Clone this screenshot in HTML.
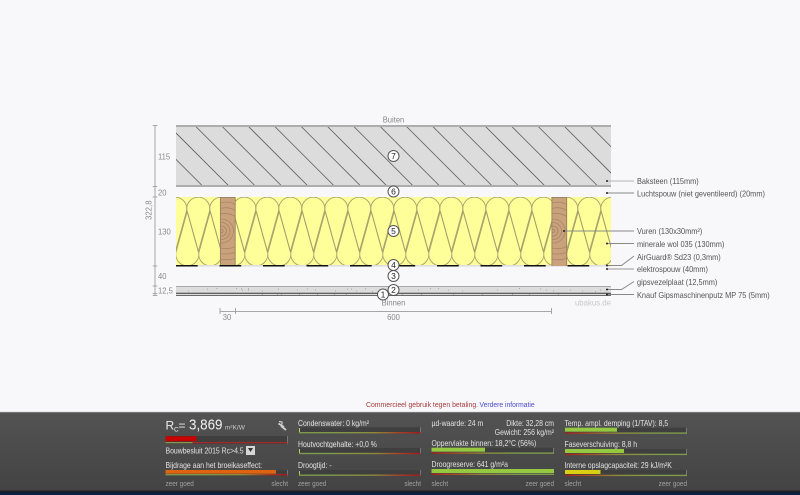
<!DOCTYPE html>
<html>
<head>
<meta charset="utf-8">
<style>
html,body{margin:0;padding:0;width:800px;height:495px;overflow:hidden;background:#f8f8fb}
svg{position:absolute;left:0;top:0;display:block;filter:blur(.3px)}
text{font-family:"Liberation Sans",sans-serif}
.d{font-size:8.5px;fill:#888}
.l{font-size:8.2px;fill:#555}
.f{font-size:8px;fill:#e2e2e2}
.s{font-size:7px;fill:#a2a2a2}
.n{font-size:7.5px}
</style>
</head>
<body>
<svg width="800" height="495" viewBox="0 0 800 495" xmlns="http://www.w3.org/2000/svg">
<defs>
<clipPath id="bc"><rect x="176" y="126" width="435" height="60"/></clipPath>
<clipPath id="wc"><rect x="220" y="197" width="15.5" height="69"/></clipPath>
<pattern id="wool" x="176" y="197" width="23" height="69" patternUnits="userSpaceOnUse">
<g fill="none" stroke="#a5a16c" stroke-width=".9">
<path d="M22.3 54.7L11.1 14.3A11.5 11.5 0 1 1 33.5 14.3L22.3 54.7"/>
<path d="M-.7 54.7L-11.9 14.3A11.5 11.5 0 1 1 10.5 14.3L-.7 54.7"/>
<path d="M11.3 14.3L.1 54.7A11.5 11.5 0 1 0 22.5 54.7L11.3 14.3"/>
</g>
</pattern>
<linearGradient id="gb" x1="0" x2="1" y1="0" y2="0">
<stop offset="0" stop-color="#7f9a4c"/><stop offset=".3" stop-color="#7f9a4c"/><stop offset=".62" stop-color="#8f8a3a"/><stop offset=".85" stop-color="#a83a26"/><stop offset="1" stop-color="#a81818"/>
</linearGradient>
<linearGradient id="gg" x1="0" x2="1" y1="0" y2="0">
<stop offset="0" stop-color="#a82020"/><stop offset=".18" stop-color="#a84a26"/><stop offset=".42" stop-color="#8f8a3a"/><stop offset=".7" stop-color="#7f9a4c"/><stop offset="1" stop-color="#7f9a4c"/>
</linearGradient>
<linearGradient id="foot" x1="0" x2="0" y1="0" y2="1">
<stop offset="0" stop-color="#535353"/><stop offset="1" stop-color="#434343"/>
</linearGradient>
<g id="wood">
<rect x="220" y="197" width="15.5" height="69" fill="#c9a27c"/>
<g clip-path="url(#wc)" fill="none" stroke="#a8866a" stroke-width=".8">
<circle cx="221.500" cy="231" r="1.600"/><circle cx="221.500" cy="231" r="5"/><circle cx="221.500" cy="231" r="8.500"/><circle cx="221.500" cy="231" r="12"/>
<path d="M220 214Q229 212 236 217M220 208.500Q229 206 236 211M220 203Q229 200.500 236 205"/>
<path d="M220 248Q229 250 236 246M220 253.500Q229 255 236 252M220 259Q229 261 236 258"/>
</g>
<path d="M220.400 197V266M235.200 197V266M220 197.400H235.500" fill="none" stroke="#98805f" stroke-width=".9"/>
</g>
</defs>

<rect width="800" height="495" fill="#f8f8fb"/>

<!-- brick -->
<rect x="176" y="125" width="435" height="62" fill="#dcdcdc"/>
<path clip-path="url(#bc)" d="M142.600 126l60 60M169 126l60 60M195.300 126l60 60M221.700 126l60 60M248 126l60 60M274.300 126l60 60M300.700 126l60 60M327 126l60 60M353.300 126l60 60M379.700 126l60 60M406 126l60 60M432.300 126l60 60M458.700 126l60 60M485 126l60 60M511.300 126l60 60M537.700 126l60 60M564 126l60 60M590.300 126l60 60" stroke="#5c5c5c" stroke-width=".8" fill="none"/>
<rect x="176" y="125" width="435" height="2" fill="#adadad"/>
<rect x="176" y="185" width="435" height="2" fill="#adadad"/>

<!-- insulation -->
<rect x="176" y="197" width="435" height="69" fill="#ffff99"/>
<rect x="176" y="197" width="435" height="69" fill="url(#wool)"/>
<rect x="176" y="265" width="435" height="1.600" fill="#dedede"/>
<use href="#wood"/>
<use href="#wood" transform="translate(331.500,0)"/>
<path d="M176 265.800h21.700M219.500 265.800h21.700M263 265.800h21.700M306.500 265.800h21.700M350 265.800h21.700M393.500 265.800h21.700M437 265.800h21.700M480.500 265.800h21.700M524 265.800h21.700M567.500 265.800h21.700" stroke="#111" stroke-width="1.500" fill="none"/>

<!-- gypsum -->
<rect x="176" y="286" width="435" height="10" fill="#dcdcdc"/>
<rect x="176" y="286" width="435" height="1" fill="#a8a8a8"/>
<rect x="176" y="292.700" width="435" height="1.200" fill="#555"/>
<rect x="176" y="295" width="435" height="1" fill="#6a6a6a"/>
<path d="M188 291.100h.8M207 289.100h.8M216.500 288.600h.8M236 288.600h.8M242 290.100h.8M241 288.800h.8M248 288.800h.8M248 290.100h.8M262 291.100h.8M277 294.400h.8M278 289.100h.8M297 290.100h.8M299 294.400h.8M317 294.400h.8M334 294.400h.8M347 289.100h.8M281 294.400h.8M262 294.400h.8M307 289h.8M315 290h.8M335 291h.8M346 294.400h.8M351 289h.8M356 291h.8M365 288.800h.8M372 291.500h.8M380 294.400h.8M402 294.400h.8M418 290h.8M421 294.400h.8M430 288.600h.8M438 288.600h.8M448 290.100h.8M453 294.400h.8M462 291h.8M482 294.400h.8M497 290h.8M512 294.400h.8M519 288.600h.8M529 294.400h.8M540 289h.8M546 290h.8M553 291h.8M558 294.400h.8M570 290h.8M582 291h.8M595 291.500h.8M600 290h.8M606 294.400h.8" stroke="#888" stroke-width=".8" fill="none"/>

<!-- dimensions -->
<path d="M155 125V296M152.700 125.500h4.600M152.700 186.500h4.600M152.700 197h4.600M152.700 266h4.600M152.700 286h4.600M152.700 293.500h4.600M152.700 295.500h4.600" stroke="#a6a6a6" stroke-width="1" fill="none"/>
<path d="M220 308v6M235.500 308v6M551.500 308v6M220 311.500h15.500M235.500 311.500h316" stroke="#a6a6a6" stroke-width="1" fill="none"/>
<text class="d" transform="translate(158,159.500) scale(.9,1)">115</text>
<text class="d" transform="translate(158,195.500) scale(.9,1)">20</text>
<text class="d" transform="translate(158,234.500) scale(.9,1)">130</text>
<text class="d" transform="translate(158,279) scale(.9,1)">40</text>
<text class="d" transform="translate(158,293.500) scale(.9,1)">12,5</text>
<text class="d" transform="translate(151.700,220) rotate(-90) scale(.92,1)">322,8</text>
<text class="d" transform="translate(227,320) scale(.9,1)" text-anchor="middle">30</text>
<text class="d" transform="translate(393.500,320) scale(.9,1)" text-anchor="middle">600</text>
<text class="d" transform="translate(393.500,122.500) scale(.95,1)" text-anchor="middle" style="font-size:8px">Buiten</text>
<text class="d" transform="translate(393.500,305.500) scale(.95,1)" text-anchor="middle" style="font-size:8px">Binnen</text>
<text transform="translate(611,305.500) scale(.92,1)" text-anchor="end" style="font-size:8.500px;fill:#c8c8c8">ubakus.de</text>

<!-- circles -->
<g fill="#fff" stroke="#555" stroke-width="1">
<circle cx="393.500" cy="156" r="5.500"/><circle cx="393.500" cy="191.500" r="5.500"/><circle cx="393.500" cy="231" r="5.500"/><circle cx="393.500" cy="265" r="5.500"/><circle cx="393.500" cy="276" r="5.500"/><circle cx="393.500" cy="290" r="5.500"/><circle cx="383" cy="294.500" r="5.500"/>
</g>
<g style="font-size:8.500px;fill:#222" text-anchor="middle">
<text x="393.500" y="159">7</text><text x="393.500" y="194.500">6</text><text x="393.500" y="234">5</text><text x="393.500" y="268">4</text><text x="393.500" y="279">3</text><text x="393.500" y="293">2</text><text x="383" y="297.500">1</text>
</g>

<!-- leaders -->
<g fill="none" stroke-width="1">
<path d="M607 181h27" stroke="#b5b5b5"/>
<path d="M607 193h27" stroke="#888"/>
<path d="M564 231h70" stroke="#888"/>
<path d="M607 243.500h27" stroke="#888"/>
<path d="M607 265.500h14.500L634 256" stroke="#888"/>
<path d="M607 269h27" stroke="#999"/>
<path d="M607 289.500h14.500L634 281.500" stroke="#888"/>
<path d="M607 294.500h27" stroke="#888"/>
</g>
<g fill="#222">
<circle cx="607" cy="181" r="1"/><circle cx="607" cy="193" r="1"/><circle cx="564" cy="231" r="1"/><circle cx="607" cy="243.500" r="1"/><circle cx="607" cy="265.500" r="1"/><circle cx="607" cy="269" r="1"/><circle cx="607" cy="289.500" r="1"/><circle cx="607" cy="294.500" r="1"/>
</g>
<text class="l" transform="translate(637,184) scale(.9,1)">Baksteen (115mm)</text>
<text class="l" transform="translate(637,196.500) scale(.9,1)">Luchtspouw (niet geventileerd) (20mm)</text>
<text class="l" transform="translate(637,234) scale(.9,1)">Vuren (130x30mm²)</text>
<text class="l" transform="translate(637,247) scale(.9,1)">minerale wol 035 (130mm)</text>
<text class="l" transform="translate(637,260) scale(.9,1)">AirGuard® Sd23 (0,3mm)</text>
<text class="l" transform="translate(637,272) scale(.9,1)">elektrospouw (40mm)</text>
<text class="l" transform="translate(637,285) scale(.9,1)">gipsvezelplaat (12,5mm)</text>
<text class="l" transform="translate(637,298) scale(.9,1)">Knauf Gipsmaschinenputz MP 75 (5mm)</text>

<!-- notice -->
<text class="n" transform="translate(366,407) scale(.92,1)" style="fill:#a83a3a">Commercieel gebruik tegen betaling.</text>
<text class="n" transform="translate(479.500,407) scale(.9,1)" style="fill:#4a4ad0">Verdere informatie</text>

<!-- footer -->
<rect x="0" y="412" width="800" height="79" fill="url(#foot)"/>
<rect x="0" y="411.500" width="800" height="1" fill="#c8c8c8" opacity=".6"/>
<rect x="0" y="490.500" width="800" height="1.500" fill="#222"/>
<rect x="0" y="492" width="800" height="3" fill="#0e2040"/>

<!-- col 1 -->
<text x="165.500" y="429.500" style="font-size:12px;fill:#eee">R</text>
<text x="174" y="431.500" style="font-size:6.500px;fill:#eee">C</text>
<text x="178.500" y="429.500" style="font-size:12px;fill:#eee">=</text>
<text transform="translate(189,429.500) scale(.93,1)" style="font-size:14.400px;fill:#f2f2f2">3,869</text>
<text x="225" y="429.500" style="font-size:6.500px;fill:#ccc">m²K/W</text>
<path d="M278.500 423.500l5.500 3.500M281 426l5 4" stroke="#cfcfcf" stroke-width="1.800" fill="none"/>
<path d="M279 421.500l3 .5 0 2.500" stroke="#cfcfcf" stroke-width="1.200" fill="none"/>
<rect x="165.500" y="436" width="122.500" height="8" fill="#3f3f3f"/>
<path d="M287.500 436v8" stroke="#777"/>
<rect x="165.500" y="436.300" width="31" height="5" fill="#c80000"/>
<rect x="165.500" y="442" width="122" height="1.300" fill="#a82828"/>
<rect x="165.500" y="442" width="27" height="1.300" fill="#7f9a4c"/>
<text class="f" transform="translate(165.500,453.500) scale(.86,1)">Bouwbesluit 2015 Rc&gt;4.5</text>
<rect x="246" y="446" width="9" height="9" fill="#d6d6d6"/>
<path d="M248 448h5l-2.500 4z" fill="#333"/>
<text class="f" transform="translate(165.500,468) scale(.86,1)">Bijdrage aan het broeikaseffect:</text>
<rect x="165.500" y="470" width="122.500" height="6" fill="#3f3f3f"/>
<path d="M287.500 470v6" stroke="#777"/>
<rect x="165.500" y="470" width="110.500" height="3.700" fill="#e0640f"/>
<rect x="165.500" y="474" width="122" height="1.400" fill="url(#gb)"/>
<text class="s" transform="translate(165.500,486) scale(.91,1)">zeer goed</text>
<text class="s" transform="translate(288,486) scale(.91,1)" text-anchor="end">slecht</text>

<!-- col 2 -->
<text class="f" transform="translate(298,426) scale(.86,1)">Condenswater: 0 kg/m²</text>
<rect x="299" y="427.300" width="121.500" height="6" fill="#3f3f3f"/>
<path d="M420.500 427.300v6" stroke="#777"/><path d="M299.500 428v4" stroke="#b5d060"/>
<rect x="299" y="432" width="121.500" height="1.400" fill="url(#gb)"/>
<text class="f" transform="translate(298,447) scale(.86,1)">Houtvochtgehalte: +0,0 %</text>
<rect x="299" y="448" width="121.500" height="6" fill="#3f3f3f"/>
<path d="M420.500 448v6" stroke="#777"/><path d="M299.500 449v4" stroke="#b5d060"/>
<rect x="299" y="452.800" width="121.500" height="1.400" fill="url(#gb)"/>
<text class="f" transform="translate(298,468) scale(.86,1)">Droogtijd: -</text>
<rect x="299" y="470" width="121.500" height="6" fill="#3f3f3f"/>
<path d="M420.500 470v6" stroke="#777"/><path d="M299.500 471v3.500" stroke="#b5d060"/>
<rect x="299" y="474.500" width="121.500" height="1.400" fill="url(#gb)"/>
<text class="s" transform="translate(298,486) scale(.91,1)">zeer goed</text>
<text class="s" transform="translate(421,486) scale(.91,1)" text-anchor="end">slecht</text>

<!-- col 3 -->
<text class="f" transform="translate(431.500,426) scale(.86,1)">µd-waarde: 24 m</text>
<text class="f" transform="translate(554,426) scale(.86,1)" text-anchor="end">Dikte: 32,28 cm</text>
<text class="f" transform="translate(554,435) scale(.86,1)" text-anchor="end">Gewicht: 256 kg/m²</text>
<text class="f" transform="translate(431.500,446) scale(.86,1)">Oppervlakte binnen: 18,2°C (56%)</text>
<rect x="431.500" y="447.700" width="122.500" height="6" fill="#3f3f3f"/>
<path d="M553.500 447.700v6" stroke="#777"/>
<rect x="431.500" y="447.700" width="53.500" height="4" fill="#94c840"/>
<rect x="431.500" y="452.400" width="122.500" height="1.400" fill="url(#gg)"/>
<text class="f" transform="translate(431.500,467) scale(.86,1)">Droogreserve: 641 g/m²a</text>
<rect x="431.500" y="469" width="122.500" height="4" fill="#94c840"/>
<rect x="431.500" y="473.600" width="122.500" height="1.400" fill="url(#gg)"/>
<text class="s" transform="translate(431.500,486) scale(.91,1)">slecht</text>
<text class="s" transform="translate(554,486) scale(.91,1)" text-anchor="end">zeer goed</text>

<!-- col 4 -->
<text class="f" transform="translate(564.500,426) scale(.86,1)">Temp. ampl. demping (1/TAV): 8,5</text>
<rect x="565" y="427.700" width="122" height="6" fill="#3f3f3f"/>
<path d="M686.500 427.700v6" stroke="#777"/>
<rect x="565" y="427.700" width="52" height="4" fill="#94c840"/>
<rect x="565" y="432.400" width="122" height="1.400" fill="url(#gg)"/>
<text class="f" transform="translate(564.500,447) scale(.86,1)">Faseverschuiving: 8,8 h</text>
<rect x="565" y="449" width="122" height="6" fill="#3f3f3f"/>
<path d="M686.500 449v6" stroke="#777"/>
<rect x="565" y="449" width="59" height="4" fill="#94c840"/>
<rect x="565" y="453.700" width="122" height="1.400" fill="url(#gg)"/>
<text class="f" transform="translate(564.500,468) scale(.86,1)">Interne opslagcapaciteit: 29 kJ/m²K</text>
<rect x="565" y="470" width="122" height="6" fill="#3f3f3f"/>
<path d="M686.500 470v6" stroke="#777"/>
<rect x="565" y="470" width="35.500" height="4" fill="#d8d010"/>
<rect x="565" y="474.700" width="122" height="1.400" fill="url(#gg)"/>
<text class="s" transform="translate(564.500,486) scale(.91,1)">slecht</text>
<text class="s" transform="translate(687,486) scale(.91,1)" text-anchor="end">zeer goed</text>
</svg>
</body>
</html>
